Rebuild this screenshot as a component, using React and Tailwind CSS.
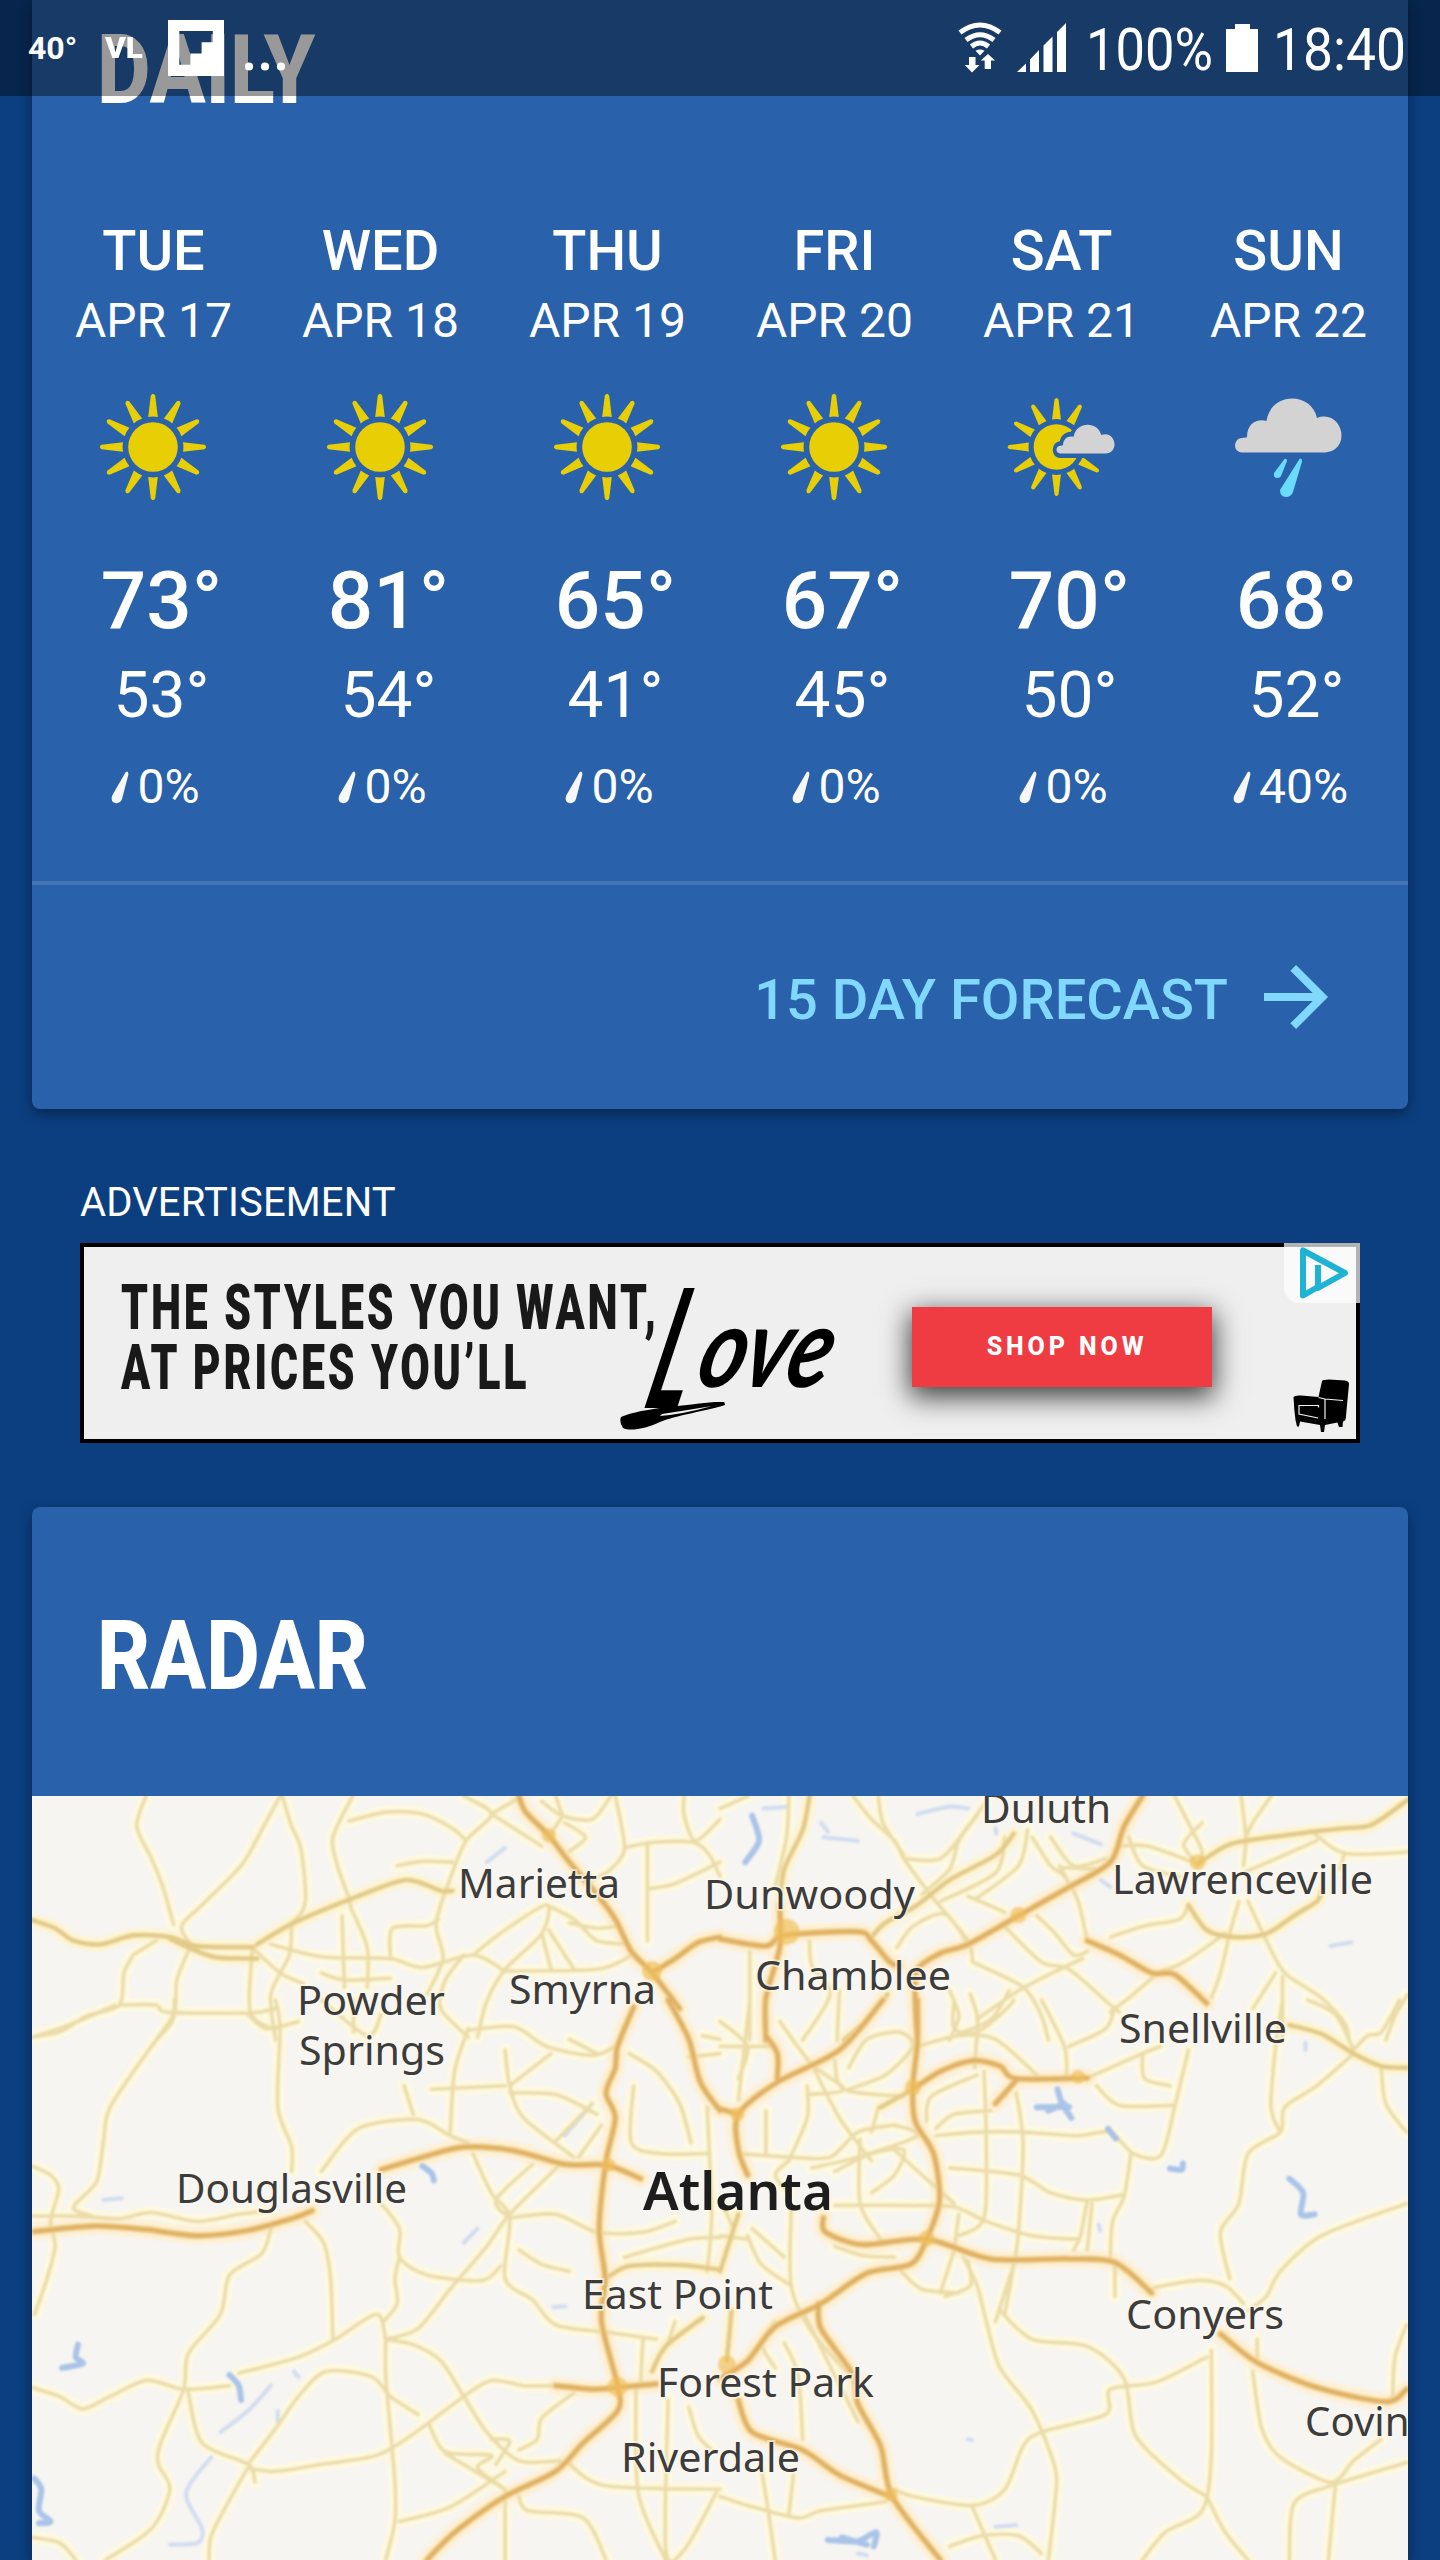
import React from "react";

const DAYS = [
  { day: "TUE", date: "APR 17", icon: "sun", high: "73°", low: "53°", rain: "0%" },
  { day: "WED", date: "APR 18", icon: "sun", high: "81°", low: "54°", rain: "0%" },
  { day: "THU", date: "APR 19", icon: "sun", high: "65°", low: "41°", rain: "0%" },
  { day: "FRI", date: "APR 20", icon: "sun", high: "67°", low: "45°", rain: "0%" },
  { day: "SAT", date: "APR 21", icon: "partly", high: "70°", low: "50°", rain: "0%" },
  { day: "SUN", date: "APR 22", icon: "rain", high: "68°", low: "52°", rain: "40%" },
];

const RAY_ANGLES = [0, 30, 60, 90, 120, 150, 180, 210, 240, 270, 300, 330];

function Rays({ angles = RAY_ANGLES }) {
  return angles.map((a) => (
    <path key={a} d="M-4.8 -30 L-2.2 -51.5 Q0 -54.8 2.2 -51.5 L4.8 -30 Q0 -30.8 -4.8 -30Z" transform={`rotate(${a})`} />
  ));
}

function SunIcon() {
  return (
    <svg className="size-[108px]" viewBox="-54 -54 108 108" fill="#e8cf05">
      <circle r="24.8" />
      <Rays />
    </svg>
  );
}

const CLOUD = "M7 43.8 C-2.5 43.8 -2 32.5 7 32 L12 31.3 C12 20 22 16 31.5 18 C36 -6 76 -6 82 15.5 C96 11 106.5 20 106.5 30 C106.5 39 98 43.8 90 43.8Z";

function PartlyIcon() {
  return (
    <svg className="size-[108px]" viewBox="-54 -54 108 108">
      <g transform="translate(-4.5 0) scale(0.92)" fill="#e8cf05">
        <circle r="24.8" />
        <Rays angles={[0, 30, 120, 150, 180, 210, 240, 270, 300, 330]} />
      </g>
      <g transform="translate(-4.5 -22) scale(0.545 0.65)">
        <path d={CLOUD} fill="#2962aa" stroke="#2962aa" strokeWidth="14" />
        <path d={CLOUD} fill="#d3d3d3" />
      </g>
    </svg>
  );
}

function RainIcon() {
  return (
    <svg className="size-[108px]" viewBox="-54 -54 108 108">
      <g transform="translate(-53 -48) scale(1 1.22)">
        <path d={CLOUD} fill="#d3d3d3" />
      </g>
      <g fill="#6adcf9">
        <path d="M-3.5 12 L-14 26 Q-15 31 -10.5 31 Q-8 31 -7 29 L-1 14 Q-1 11 -3.5 12Z" />
        <path d="M11.5 12 L-8 43 Q-8 50 -2 50 Q3 50 5 45 L14 14.5 Q14 10.5 11.5 12Z" />
      </g>
    </svg>
  );
}

const ICONS = { sun: SunIcon, partly: PartlyIcon, rain: RainIcon };

function Drop() {
  return (
    <svg className="h-[33px] w-[18px]" viewBox="0 0 18 33" fill="#f7f7f8">
      <path d="M14.6 1.2 L1.2 24.5 Q-1 32 5.5 32.2 Q9.5 32 11 28 L17.4 3.6 Q17.4 -0.8 14.6 1.2Z" />
    </svg>
  );
}

function DayColumn({ day, date, icon, high, low, rain }) {
  const Icon = ICONS[icon];
  return (
    <div className="flex w-[227px] flex-col items-center whitespace-nowrap text-white">
      <div className="h-16 pl-[2px] text-[56px] leading-[64px] font-medium">{day}</div>
      <div className="mt-1.5 h-16 pl-[2px] text-[48px] leading-[64px]">{date}</div>
      <div className="mt-10 h-[108px]">
        <Icon />
      </div>
      <div className="mt-[52px] h-24 pl-[18px] text-[80px] leading-[96px] font-medium">{high}</div>
      <div className="mt-[7px] h-20 pl-[18px] text-[64px] leading-[80px]">{low}</div>
      <div className="mt-[23px] flex h-14 items-center gap-[8px] pl-[6px] text-[48px] leading-[56px]">
        <Drop />
        <span>{rain}</span>
      </div>
    </div>
  );
}

function StatusBar() {
  return (
    <header className="absolute inset-x-0 top-0 z-10 flex h-24 items-start bg-black/40 pl-[28px] text-white">
      <div className="mt-[21px] w-[77px] text-[32px] leading-[54px] font-bold">40°</div>
      <div className="mt-[21px] w-[63px] text-[30px] leading-[54px] font-black">
        <span className="inline-block origin-left scale-x-[1.05]">VL</span>
      </div>
      <svg className="mt-5 size-14" viewBox="0 0 56 56" fill="#fff">
        <path fillRule="evenodd" d="M0 0H56V56H0Z M11.3 11V44.7H22.4V33.5H33.6V22.3H44.8V11Z" />
      </svg>
      <svg className="mt-[62px] ml-5 h-[9px] w-[42px]" viewBox="0 0 42 9" fill="#fff">
        <circle cx="5" cy="4.5" r="4.1" />
        <circle cx="21" cy="4.5" r="4.1" />
        <circle cx="37" cy="4.5" r="4.1" />
      </svg>
      <svg className="mt-[22px] ml-auto h-[51px] w-[44px]" viewBox="0 0 44 51">
        <g fill="none" stroke="#fff" strokeWidth="5">
          <path d="M2 10.5 Q22 -4.5 42 10.5" />
          <path d="M8 18 Q22 7.5 36 18" />
          <path d="M13.5 24.5 Q22 17.5 30.5 24.5" />
        </g>
        <path d="M17.5 28.8 Q22 26 26.5 28.8 L22 33.5Z" fill="#fff" />
        <path d="M11 35h6.500v8h4L14 50.500L6.800 43h4.200Z" fill="#fff" />
        <path d="M26.700 47v-8.500h-4L30 32l7 6.500h-4V47Z" fill="#fff" />
      </svg>
      <svg className="mt-[23px] ml-[15px] h-[49px] w-[49px]" viewBox="0 0 49 49" fill="#fff">
        <path d="M0 49L9 40.500V49Z M13 49V36.500L22 27V49Z M26.500 49V22.500L35.500 13.500V49Z M40 49V9L49 0V49Z" />
      </svg>
      <div className="mt-[20px] ml-[20px] w-[128px] text-[60px] leading-[60px]">
        <span className="inline-block origin-left scale-x-[0.875]">100%</span>
      </div>
      <svg className="mt-6 ml-3 h-12 w-8" viewBox="0 0 32 48" fill="#fff">
        <path d="M9 0H24V5H32V48H0V5H9Z" />
      </svg>
      <div className="mt-[20px] ml-[15px] w-[167px] text-[60px] leading-[60px]">
        <span className="inline-block origin-left scale-x-[0.89]">18:40</span>
      </div>
    </header>
  );
}

function AdBanner() {
  return (
    <div className="relative h-[200px] w-[1280px] border-4 border-black bg-[#efefef] text-[#191919]">
      <div className="pt-[31px] pl-[37px] text-[63px] leading-[60px] font-black tracking-[4.2px] whitespace-nowrap">
        <div className="w-fit origin-left scale-x-[0.68]">THE STYLES YOU WANT,</div>
        <div className="w-fit origin-left scale-x-[0.68]">AT PRICES YOU’LL</div>
      </div>
      <div className="absolute top-[8px] left-[574px] flex -skew-x-[15deg] items-baseline font-[Lato] leading-[160px] whitespace-nowrap text-black italic">
        <span className="inline-block w-[46px] origin-left translate-y-[9px] scale-x-[0.5] text-[166px] font-bold">L</span>
        <span className="inline-block origin-left -translate-y-[12px] scale-x-[0.8] text-[112px] font-bold">ove</span>
      </div>
      <svg className="absolute top-[155px] left-[534px] h-8 w-[112px]" viewBox="0 0 112 32">
        <path d="M3 15 C20 7 60 4 106 -1 L107 3 C92 8 55 14 42 20 C30 26 12 30 5 26 Q1 20 3 15Z" />
        <path d="M44 12 Q70 8 94 4 Q66 12 42 14Z" fill="#efefef" />
      </svg>
      <div className="absolute top-[60px] left-[828px] flex h-20 w-[300px] items-center justify-center bg-[#ef3c42] pl-[10px] text-[25px] font-extrabold tracking-[3.9px] text-white shadow-[0_8px_26px_2px_rgba(0,0,0,0.75)]">
        SHOP NOW
      </div>
      <div className="absolute -top-1 -right-1 h-[60px] w-[76px] rounded-bl-[16px] bg-white/70">
        <svg className="h-[60px] w-[76px]" viewBox="0 0 76 60" fill="none" stroke="#1fb3d3" strokeWidth="6" strokeLinejoin="round">
          <path d="M34 22V45L61 30L19 7.500V52.500L33 44.500" />
        </svg>
      </div>
      <svg className="absolute top-[132px] left-[1209px] h-[53px] w-[57px]" viewBox="0 0 57 53">
        <path d="M29 2 Q30 0.500 36 0.500 L52 1.500 Q56 2 56 5 L53 37 Q53 42 50 42.500 L49.500 48 H46 L44.500 43.500 L32 46 L31 53 H28 L27 46 L7 42.500 L6 47.500 H4 L2.500 41 Q1 30 0.500 18 Q2 16 8 16.500 L25.500 18Z" />
        <path d="M25.500 18.500L32 20L50 21.500 M32 20.500V40 M25.500 28.500V26.500H6V35L25 39" fill="none" stroke="#efefef" strokeWidth="1.200" />
      </svg>
    </div>
  );
}

/* Road geometry is digitised per quadrant sheet; each sheet has its own origin. */
const SHEET_X = 720 / 1568;
const SHEET_Y = 560 / 1568;
const ORIGINS = { nw: [-32, -316], ne: [688, -316], sw: [-32, 204], se: [688, 204] };

const MINOR = {
  nw: `318,885 298,970 330,1060 355,1140 378,1245|610,885 570,980 525,1080 440,1190 395,1250 420,1310|615,885 635,970 655,1030 665,1180 635,1240 560,1300 548,1330|768,885 725,1000 735,1080 760,1170|760,955 840,930 920,935 985,975 1015,1010|1010,885 1070,935 1015,1010 985,1100 950,1240 965,1340 930,1440|865,1080 920,1068 985,1070|290,1330 270,1380 260,1470 190,1500 130,1545 70,1560|340,1290 290,1330|410,1320 385,1400 380,1490 340,1568|260,1470 340,1470 365,1490 545,1492 600,1480|550,1310 545,1490 600,1540|550,1310 610,1380 660,1410|590,1300 700,1335 850,1340 920,1365 1030,1330 1100,1375|635,1240 630,1330 590,1440 600,1568|745,1220 750,1420|765,1200 800,1310 800,1420|850,1330 855,1255 930,1248 955,1230|1030,1330 1100,1260 1190,1190 1180,1270 1100,1370 1060,1460 1040,1560|1190,1190 1250,1230 1300,1290 1370,1300|1180,1270 1200,1370|1195,1260 1250,1370|1100,1375 1300,1370 1370,1335|1070,935 1180,1025|1070,935 1130,890|1180,900 1225,940 1290,950 1330,885|1225,940 1200,990|1340,885 1360,1030 1330,1090 1290,1120|1360,1030 1420,1015 1510,1015 1545,1050 1568,1110|1490,885 1490,940 1515,1010 1568,950|1410,1015 1410,1290|1410,1145 1470,1130 1568,1070|1010,1330 970,1400 960,1480 1020,1560|1240,1240 1300,1255 1340,1250|1210,885 1225,940|760,1170 765,1200|700,1380 750,1400 850,1395|1230,960 1275,1000 1240,1040`,
  ne: `150,885 145,1000 120,1140|290,885 330,950 380,1010 400,1060 440,1130 470,1180 540,1290 550,1350|400,1060 480,1060 540,970 580,900|560,940 520,1010 500,1090 440,1160|345,885 355,960 400,1050|680,1000 720,1080 750,1110 780,1180 800,1290|670,980 650,1080 560,1170|540,1165 620,1210|690,1220 730,1270 770,1330 800,1320|620,1250 700,1350 760,1370 850,1470 870,1490|550,1350 660,1420 700,1500 715,1568|850,1280 920,1250 1000,1230 1020,1190|990,885 1020,960 1050,1040 1040,1080|1135,885 1145,1000 1140,1080|1200,885 1160,960 1145,1000|890,1000 920,1080 1000,1110|870,1025 930,1025 1030,1070|1290,985 1360,1045 1498,1042|1360,1045 1350,1090|1140,1100 1300,1010|1130,1180 1110,1270 1090,1380 1070,1450|1150,1180 1190,1290 1230,1380 1310,1450 1360,1520 1370,1568|1100,1270 1010,1350 950,1380|1225,1390 1225,1568|1498,1440 1470,1500 1450,1568|1210,1380 1160,1480|790,1340 740,1370 650,1430 560,1510|500,1430 520,1500 500,1568|65,1320 65,1568|385,1310 420,1250 490,1215 540,1300|195,1290 200,1360 240,1440 180,1568|260,1430 255,1568|630,1430 590,1510 520,1550|545,1440 560,1500 560,1568|740,1085 830,1090|760,1130 740,1080|0,920 60,885|950,1385 900,1440 850,1490|1040,1075 1010,1020 1050,960|720,1000 770,1080 840,1060|480,1180 600,1100 620,1000`,
  sw: `70,105 150,70 250,15|380,0 375,60 330,130 240,300 225,400 210,510 160,580 200,605|70,465 110,490 128,530 110,620 120,690 100,790 75,880|70,605 170,605 260,612 330,595 430,620 520,600 590,590|600,0 610,80 605,300 635,410 635,480|540,40 580,80 650,60|700,480 780,360 910,335 980,380 1020,400|880,240 900,320|1020,80 990,200 980,380|1020,85 1120,75 1190,130 1290,155 1340,130|1100,140 1110,240 1140,330 1250,440|1110,240 1200,150|940,250 1100,240|1110,260 1210,265 1300,320|1370,150 1430,200 1480,290 1505,400|1380,240 1375,400 1440,430 1540,430|830,570 870,640 870,720 930,770 1050,785 1090,745|1030,430 1070,540 1110,610 1100,780 1160,840 1210,910 1320,930 1430,950|1220,460 1110,600 1060,690 980,810 910,920 840,950|1160,460 1080,560 1110,610|1110,610 1210,600 1300,650 1400,650 1470,620|1130,700 1180,740 1240,760|665,620 705,680 720,780 725,950|590,640 570,710 500,770 480,880 410,990 400,1090 350,1240 345,1300 370,1370 330,1480 230,1568|520,1045 650,1000 730,950 820,880 840,950|870,720 860,780 865,850 835,900|840,950 840,1050 850,1200 860,1350 860,1460 840,1568|840,950 900,965 960,1010 1010,1110 1060,1210 1130,1290 1220,1290|70,1085 130,1110 180,1145 240,1110 320,1065 400,1090 500,1080|410,1100 440,1240 540,1300 555,1350|540,1300 600,1200 650,1110 710,1040 810,1055 850,1110 910,1160|540,1310 600,1320 700,1300 820,1275 900,1215 1010,1110 1070,1065 1140,1080 1210,1080|540,1310 500,1400 460,1500 455,1568|935,1190 970,1265 1070,1275 1040,1310 1100,1370|970,1270 1100,1370|1070,1230 1110,1235 1080,1300|1250,1100 1180,1170 1170,1230 1130,1260|1100,1380 1100,1568|870,1460 980,1420 1100,1320|1130,1390 1150,1430 1270,1450 1320,1568|1240,1300 1320,1360 1568,1370|1385,1080 1390,1380 1450,1568|1455,1120 1450,1540 1490,1540 1560,1380|1500,1140 1520,1220 1550,1260|70,1505 130,1520 165,1568|1395,1080 1400,950|1540,300 1550,600 1540,760|1360,720 1500,670 1568,665|770,0 770,90|830,40 800,100 700,0|1470,900 1455,960|1240,110 1300,150|1210,395 1290,290|1530,100 1568,110|1500,160 1568,150|1310,350 1260,440`,
  se: `65,0 40,280|155,590 155,800 200,930 290,1060|100,310 100,430|190,240 190,330 150,450|40,430 150,440 240,440 300,370 380,350|130,60 200,180 270,250 190,265|250,170 270,250 400,270|280,190 320,110 390,90 420,130 360,210 280,250|430,130 520,100 600,110 690,210|510,0 510,80 560,90 620,30 640,0|560,80 555,190|450,340 460,270 560,210|470,360 510,320 590,310|575,200 580,400 575,610 520,660|645,260 660,400 650,650 640,740 620,880|470,380 560,370 660,370 780,380 850,370 900,430 960,435 990,300 1020,140|700,0 750,130 755,210|760,130 840,80 860,20|800,218 850,190 920,150 960,130|920,150 925,220 980,240|820,240 870,295 985,295|500,470 650,490 720,540 800,560 880,545|895,430 880,550 855,620 850,730|860,740 860,830|800,560 785,660 770,700|810,570 800,700|250,575 400,575 510,580 580,620 680,660 780,670|305,390 305,570 350,670|250,480 330,430 400,420 380,490 330,540|380,420 440,490 510,570|520,600 510,700|530,720 560,800 580,900 610,1030 680,1150 730,1310 730,1400 715,1568|640,740 600,900|480,820 510,700|395,760 440,810 520,820|610,870 680,950 800,970 880,1060 905,1220 1000,1340 1060,1390|1070,980 1070,1280 1050,1430 970,1490 920,1568|1060,1000 950,1070 850,1090 840,1160 700,1210 660,1250 620,1370 550,1415 420,1390 380,1370|1060,1390 1100,1490 1150,1568|1160,1040 1180,1200 1220,1280 1330,1350 1380,1290 1440,1230|1495,1295 1330,1360 1250,1410 1240,1568|1340,1360 1325,1568|1495,570 1310,660 1220,760 1190,830 1150,870|945,805 1040,785 1100,800 1140,850|1110,780 1090,650 1130,570 1150,430 1220,370 1230,300 1300,240 1380,150|1225,0 1210,130 1200,300 1220,370|1440,190 1450,290 1495,370|1280,0 1340,40 1380,140|1380,140 1410,100 1440,90 1480,0|1495,910 1470,1000 1465,1110|1170,950 1170,1010|0,1390 60,1415 170,1450 220,1430 360,1405|90,1310 105,1430 120,1568|160,1330 150,1440|140,960 170,1050 180,1230|500,1530 570,1500 650,1500 700,1550|550,1420 600,1568|70,640 140,720|0,60 60,130 40,220|0,130 120,130|150,450 120,490 150,540|380,350 430,380 300,440 200,470|200,180 260,330 330,450|60,660 90,740 155,800|180,870 230,1000 300,1180|120,900 90,960 120,1030|250,690 310,715 380,720|0,660 60,670|0,560 30,640|345,300 330,370|540,730 545,800 490,830`,
};

const MEDIUM = {
  nw: `560,1300 640,1240 780,1165 885,1120 960,1150 985,1150|70,1232 120,1255 160,1290 220,1300 290,1275 370,1280 430,1305 550,1308|370,1285 440,1325 480,1338 560,1340`,
  ne: `195,885 180,980 140,1090 130,1200|640,990 600,1050 500,1120 430,1190 360,1240 330,1280|1040,1075 1110,1020 1200,1000 1290,985 1360,975 1420,965 1498,895|1020,1190 1060,1260 1120,1280 1190,1270 1250,1220 1300,1180 1310,1150|365,1440 320,1510 270,1568`,
  sw: `1320,780 1370,745 1480,742 1568,755|1420,1040 1450,970 1530,890`,
  se: `1240,70 1310,95 1380,150 1440,185 1495,190|40,600 10,720 0,760|25,870 15,1010|350,300 420,250`,
};

const MAJOR = {
  nw: `1130,885 1145,930 1195,995 1240,1070 1300,1160 1340,1230 1375,1320 1420,1380 1480,1480|1420,1380 1470,1340 1520,1295 1568,1280`,
  ne: `0,1285 100,1305 140,1275 300,1265 330,1290 370,1350 390,1360|130,1190 130,1310 100,1450 100,1568|920,885 880,970 850,1070 760,1140 650,1220 540,1300 480,1325 430,1370 425,1450 430,1568|800,1290 870,1330 940,1380 990,1385 1060,1465`,
  sw: `75,648 210,633 320,643 430,660 540,645 640,610 680,590|830,475 920,440 1010,412 1120,422 1230,460 1320,462 1395,500|1380,20 1345,130 1340,190 1320,260 1340,330 1320,450 1305,640 1318,780 1310,900 1345,1080 1345,1150 1270,1240 1210,1320 1100,1390 1000,1480 950,1540 930,1568|1455,0 1500,110 1525,230 1568,310|1210,1080 1290,1090 1345,1085 1430,1075`,
  se: `100,100 125,150 125,220|355,0 260,140 125,230 40,320 40,420 60,490|430,0 430,120 420,240 425,340 465,430 478,560 450,670 415,740 320,765 220,850 120,915 60,1010 0,1060|0,305 40,320|420,250 480,200 550,170 610,185 645,220 800,218|645,225 600,290|225,610 230,650 310,685 450,670 590,725 760,725 860,735 940,820|1090,935 1170,1015 1300,1085 1450,1125 1495,1090|215,850 220,920 290,1050 300,1130 350,1250 375,1390 480,1568|40,1120 70,1210 180,1260 260,1330 370,1390`,
};

/* Interchange hot spots: x, y, radius */
const JUNCTIONS = [
  ["ne", 145, 1265, 13],
  ["nw", 1420, 1375, 10],
  ["nw", 1195, 995, 7],
  ["ne", 650, 1218, 8],
  ["ne", 1040, 1070, 8],
  ["sw", 1345, 1083, 10],
  ["se", 420, 245, 8],
  ["se", 450, 668, 8],
  ["se", 780, 215, 7],
  ["sw", 1325, 462, 7],
  ["se", 38, 320, 7],
  ["se", 372, 1385, 7],
  ["se", 15, 1020, 9],
];

const WATER = {
  nw: ``,
  ne: `70,940 85,1010 55,1070`,
  sw: `920,465 940,485 945,505|170,965 165,1000 180,1018 135,1030|75,1340 90,1370 85,1430 110,1460 85,1465|500,1050 520,1080 525,1120`,
  se: `690,300 760,300|735,250 745,290 765,330|715,310 750,290|1240,500 1270,540 1265,600 1295,600|235,1512 300,1515 340,1490 335,1530|265,1505 320,1525|980,472 1005,475 1008,458|845,360 862,388`,
};

const STREAMS = {
  nw: `1060,1070 1100,1030`,
  ne: `95,920 150,915|225,1000 300,1010|430,935 500,915 540,920|770,990 830,1020|1330,1305 1350,1300 1375,1295|220,960 235,985|600,975 602,990|830,1120 850,1140`,
  sw: `460,1280 405,1380 440,1480 430,1520 370,1525|590,1080 540,1150 480,1210|1040,640 1010,680|1290,290 1230,380|225,560 265,555|1205,860 1232,858|605,1150 605,1180|640,1040 650,1055`,
  se: `825,630 828,645|540,1230 548,1232|600,1475 645,1470|1275,120 1275,140|300,1550 320,1555`,
};

function place(key, x, y) {
  const [ox, oy] = ORIGINS[key];
  return [x * SHEET_X + ox, y * SHEET_Y + oy];
}

function smooth(points) {
  let d = `M${points[0][0]} ${points[0][1]}`;
  for (let i = 0; i < points.length - 1; i++) {
    const p0 = points[i - 1] || points[i];
    const p1 = points[i];
    const p2 = points[i + 1];
    const p3 = points[i + 2] || p2;
    const c = [
      p1[0] + (p2[0] - p0[0]) / 7, p1[1] + (p2[1] - p0[1]) / 7,
      p2[0] - (p3[0] - p1[0]) / 7, p2[1] - (p3[1] - p1[1]) / 7,
      p2[0], p2[1],
    ].map((n) => n.toFixed(1));
    d += `C${c.join(" ")}`;
  }
  return d;
}

function toPath(sheets) {
  return Object.entries(sheets)
    .filter(([, lines]) => lines)
    .map(([key, lines]) =>
      lines
        .split("|")
        .map((line) =>
          smooth(
            line.split(" ").map((pair) => {
              const [x, y] = pair.split(",").map(Number);
              return place(key, x, y);
            })
          )
        )
        .join("")
    )
    .join("");
}

const PATHS = {
  minor: toPath(MINOR),
  medium: toPath(MEDIUM),
  major: toPath(MAJOR),
  water: toPath(WATER),
  streams: toPath(STREAMS),
};

/* label, left, baseline, width */
const PLACES = [
  ["Duluth", 952, 27, 125],
  ["Marietta", 429, 102, 157],
  ["Dunwoody", 675, 113, 206],
  ["Lawrenceville", 1083, 98, 256],
  ["Chamblee", 726, 194, 191],
  ["Smyrna", 480, 208, 142],
  ["Powder", 268, 219, 143],
  ["Springs", 270, 269, 141],
  ["Snellville", 1090, 247, 163],
  ["Douglasville", 147, 407, 226],
  ["East Point", 553, 513, 186],
  ["Forest Park", 628, 601, 212],
  ["Riverdale", 592, 676, 174],
  ["Conyers", 1097, 533, 153],
  ["Covington", 1276, 640, 188],
];

function RadarMap() {
  return (
    <svg className="block h-[764px] w-[1376px] bg-[#f7f5f1]" viewBox="0 0 1376 764">
      <g fill="none" strokeLinecap="round" strokeLinejoin="round" className="blur-[1px]">
        <path d={PATHS.minor} stroke="#fdf8e0" strokeWidth="13" />
        <path d={PATHS.medium} stroke="#fdf4d2" strokeWidth="14" />
        <path d={PATHS.major} stroke="#fdf0d6" strokeWidth="18" />
        <path d={PATHS.streams} stroke="#d0dcf0" strokeWidth="4" />
        <path d={PATHS.minor} stroke="#ebdca8" strokeWidth="3.6" />
        <path d={PATHS.medium} stroke="#e3ca88" strokeWidth="4.6" />
        <path d={PATHS.major} stroke="#f3d592" strokeWidth="7.5" />
        <path d={PATHS.major} stroke="#dfb066" strokeWidth="4" />
        {JUNCTIONS.map(([key, x, y, r]) => {
          const [cx, cy] = place(key, x, y);
          return <circle key={`${key}-${x}`} cx={cx} cy={cy} r={r} fill="#f0be5a" fillOpacity="0.65" />;
        })}
        <path d={PATHS.water} stroke="#a9c4e8" strokeWidth="6" />
      </g>
      <g className="font-['Noto_Sans'] text-[40px]" fill="#3c3c3c">
        {PLACES.map(([name, x, y, w]) => (
          <text key={name} x={x - 3} y={y} textLength={w + 5} lengthAdjust="spacingAndGlyphs" stroke="#fbf8ee" strokeWidth="4" strokeOpacity="0.6" paintOrder="stroke">
            {name}
          </text>
        ))}
        <text x="611" y="414" textLength="190" lengthAdjust="spacingAndGlyphs" className="text-[52px] font-semibold" fill="#1d1d1d">
          Atlanta
        </text>
      </g>
    </svg>
  );
}

export default function App() {
  return (
    <div className="relative h-[2560px] w-[1440px] overflow-hidden bg-[#0c3f80] px-8 font-[Roboto,sans-serif]">
      <StatusBar />

      <section className="h-[1109px] rounded-b-lg bg-[#2962aa] shadow-[0_5px_14px_rgba(0,0,0,0.4)]">
        <h2 className="h-[140px] pl-[65px] text-[96px] leading-[140px] font-extrabold text-white">
          <span className="inline-block origin-left scale-x-[0.86]">DAILY</span>
        </h2>
        <div className="mt-[79px] flex px-[7px]">
          {DAYS.map((d) => (
            <DayColumn key={d.day} {...d} />
          ))}
        </div>
        <div className="mt-[66px] h-1 bg-[#4475b4]" />
        <div className="flex h-56 items-center justify-end pr-16 text-[#80d8ff]">
          <span className="pt-[5px] text-[56px] leading-[64px] font-medium">15 DAY FORECAST</span>
          <svg className="ml-5 size-24" viewBox="0 0 24 24" fill="currentColor">
            <path d="M12 4l-1.410 1.410L16.170 11H4v2h12.170l-5.580 5.590L12 20l8-8z" />
          </svg>
        </div>
      </section>

      <section className="mt-[70px] px-12">
        <div className="h-12 text-[40px] leading-[48px] tracking-[0.15px] text-white">ADVERTISEMENT</div>
        <div className="mt-4">
          <AdBanner />
        </div>
      </section>

      <section className="mt-16 overflow-clip rounded-t-lg bg-[#2962aa] shadow-[0_5px_14px_rgba(0,0,0,0.4)]">
        <h2 className="flex h-[289px] items-center pt-[9px] pl-[65px] text-[96px] font-extrabold text-white">
          <span className="inline-block origin-left scale-x-[0.86]">RADAR</span>
        </h2>
        <RadarMap />
      </section>
    </div>
  );
}
